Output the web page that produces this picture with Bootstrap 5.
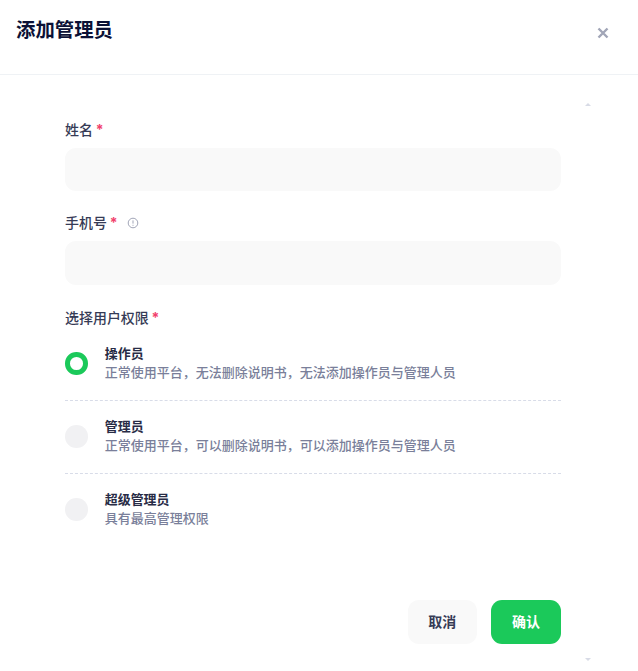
<!DOCTYPE html>
<html lang="zh">
<head>
<meta charset="utf-8">
<title>添加管理员</title>
<link rel="stylesheet" href="https://cdn.jsdelivr.net/npm/bootstrap@5.3.0/dist/css/bootstrap.min.css">
<style>
html,body{height:671px;overflow:hidden;background:#fff}
body{font-family:Inter,"Noto Sans CJK SC",sans-serif;color:#181c32}
.dlg-head{height:75px;border-bottom:1px solid #eff2f5;padding:17px 25px 0 16px}
.dlg-title{font-size:19.4px;font-weight:700;line-height:26px;color:#0b1136;margin:0}
.dlg-close{width:20px;height:20px;margin-top:6px;border:0;background:none;padding:0;line-height:0}
.dlg-body{height:596px}
.form-wrap{padding:45px 77px 0 65px}
.fld-label{font-size:13.975px;font-weight:500;line-height:20px;color:#363b56;margin-bottom:8px}
.req{color:#f1416c;font-weight:700;margin-left:-1px}
.fld-input{height:43.25px;background:#f9f9f9;border:0;border-radius:11px;margin-bottom:22px}
.fld-input:focus{background:#f9f9f9;box-shadow:none}
.info-ic{margin-left:6px;vertical-align:-1px}
.perm-label{margin-top:23.25px}
.opt-row{height:73px;border-bottom:1px dashed #d8dce8}
.opt-row.last{height:71.5px;border-bottom:0}
.radio-dot{width:22.75px;height:22.75px;border-radius:50%;background:#f1f1f3;flex:none;margin-right:17px}
.radio-dot.on{background:#fff;border:5.5px solid #1bc95a}
.opt-text{padding-bottom:1px}
.opt-title{font-size:12.95px;font-weight:700;line-height:19px;color:#282c46}
.opt-desc{font-size:13px;font-weight:500;line-height:19.5px;color:#7a7f9a}
.btn-gap{margin-top:54.75px;gap:14px}
.act-btn{height:44px;width:69.5px;border:0;border-radius:11px;font-size:13.975px;font-weight:700;padding:0}
.act-cancel{background:#f9f9f9;color:#363b56}
.act-ok{background:#1bc95a;color:#fff;width:70px}
.scroll-arrow{position:absolute;left:585px;width:0;height:0;border-left:3.5px solid transparent;border-right:3.5px solid transparent}
.scroll-arrow.up{top:103px;border-bottom:3px solid #d8dbe6}
.scroll-arrow.down{top:658px;border-top:3px solid #d8dbe6}
</style>
</head>
<body>
<div class="dlg-head d-flex justify-content-between align-items-start">
  <h2 class="dlg-title">添加管理员</h2>
  <button class="dlg-close" type="button" aria-label="关闭">
    <svg width="20" height="20" viewBox="0 0 20 20"><path d="M5.5 5.5 14.5 14.5M14.5 5.5 5.5 14.5" stroke="#a1a5b7" stroke-width="2.4" fill="none"/></svg>
  </button>
</div>
<div class="dlg-body">
  <div class="form-wrap">
    <div class="fld-label">姓名 <span class="req">*</span></div>
    <input class="form-control fld-input" type="text">
    <div class="fld-label">手机号 <span class="req">*</span>
      <svg class="info-ic" width="12" height="12" viewBox="0 0 12 12"><circle cx="6" cy="6" r="4.8" fill="none" stroke="#a1a5b7" stroke-width="1"/><path d="M6 3.4V6.6M6 7.8V8.8" stroke="#a1a5b7" stroke-width="1"/></svg>
    </div>
    <input class="form-control fld-input" type="text">
    <div class="fld-label perm-label mb-0">选择用户权限 <span class="req">*</span></div>
    <div class="opt-row d-flex align-items-center">
      <span class="radio-dot on"></span>
      <div class="opt-text"><div class="opt-title">操作员</div><div class="opt-desc">正常使用平台，无法删除说明书，无法添加操作员与管理人员</div></div>
    </div>
    <div class="opt-row d-flex align-items-center">
      <span class="radio-dot"></span>
      <div class="opt-text"><div class="opt-title">管理员</div><div class="opt-desc">正常使用平台，可以删除说明书，可以添加操作员与管理人员</div></div>
    </div>
    <div class="opt-row last d-flex align-items-center">
      <span class="radio-dot"></span>
      <div class="opt-text"><div class="opt-title">超级管理员</div><div class="opt-desc">具有最高管理权限</div></div>
    </div>
    <div class="d-flex justify-content-end btn-gap">
      <button class="act-btn act-cancel" type="button">取消</button>
      <button class="act-btn act-ok" type="button">确认</button>
    </div>
  </div>
</div>
<span class="scroll-arrow up"></span>
<span class="scroll-arrow down"></span>
<script src="https://cdn.jsdelivr.net/npm/bootstrap@5.3.0/dist/js/bootstrap.bundle.min.js"></script>
</body>
</html>
